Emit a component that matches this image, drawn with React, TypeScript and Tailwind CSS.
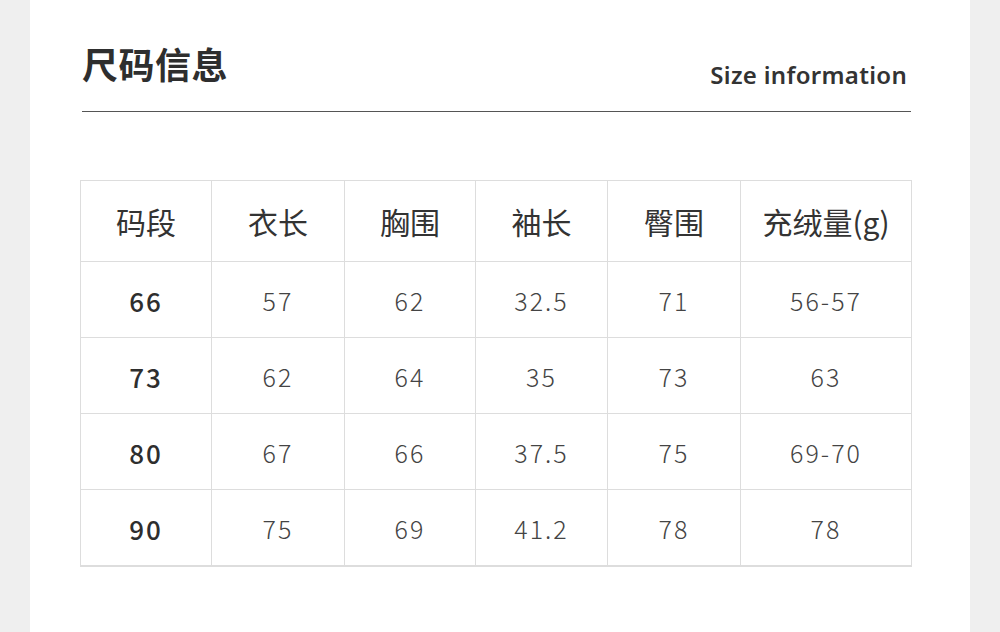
const headers = ['码段', '衣长', '胸围', '袖长', '臀围', '充绒量(g)']
const rows = [
  ['66', '57', '62', '32.5', '71', '56-57'],
  ['73', '62', '64', '35', '73', '63'],
  ['80', '67', '66', '37.5', '75', '69-70'],
  ['90', '75', '69', '41.2', '78', '78'],
]
const widths = ['w-[131px]', 'w-[133px]', 'w-[131px]', 'w-[132px]', 'w-[133px]', 'w-[171px]']

export default function App() {
  return (
    <div className="w-[1000px] h-[632px] bg-[#efefef] flex justify-center overflow-hidden">
      <div className="w-[940px] h-full bg-white pl-[50px] pr-[58px] pt-[38px] font-['Noto_Sans_CJK_SC','Noto_Sans',sans-serif]">
        {/* heading */}
        <div className="ml-[2px] mr-[1px] flex items-end justify-between border-b border-[#555] pb-[23px]">
          <h1 className="text-[36px] leading-[50px] font-bold text-[#2e2e2e] tracking-[0.5px]">尺码信息</h1>
          <span className="text-[24px] leading-[30px] font-semibold text-[#333] mr-[4px] mb-[-2px] tracking-[0.3px] font-['Noto_Sans',sans-serif]">
            Size information
          </span>
        </div>

        <table className="w-[832px] table-fixed mt-[68px] border-collapse text-center">
          <thead>
            <tr className="h-[81px]">
              {headers.map((h, i) => (
                <th key={h} className={`${widths[i]} border border-[#ddd] font-normal text-[30px] text-[#333]`}>
                  {h}
                </th>
              ))}
            </tr>
          </thead>
          <tbody>
            {rows.map((r, ri) => (
              <tr key={ri} className={`h-[76px] ${ri === rows.length - 1 ? 'border-b-2 border-[#ddd]' : ''}`}>
                {r.map((c, i) => (
                  <td
                    key={i}
                    className={
                      i === 0
                        ? 'border border-[#ddd] text-[26px] font-medium text-[#2e2e2e] tracking-[2px] pt-[2px]'
                        : 'border border-[#ddd] text-[25px] font-light text-[#444] tracking-[2px] pt-[2px]'
                    }
                  >
                    {c}
                  </td>
                ))}
              </tr>
            ))}
          </tbody>
        </table>
      </div>
    </div>
  )
}
